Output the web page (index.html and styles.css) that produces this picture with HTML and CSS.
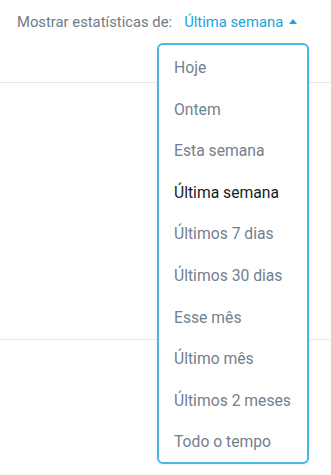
FILE: index.html
```html
<!DOCTYPE html>
<html lang="pt">
<head>
<meta charset="utf-8">
<link rel="stylesheet" href="styles.css">
</head>
<body>
<div class="page">
  <div class="toolbar">
    <span class="label">Mostrar estatísticas de:</span>
    <span class="picker">Última semana <span class="caret"></span></span>
  </div>
  <div class="section first"></div>
  <div class="section second"></div>
  <ul class="menu">
    <li>Hoje</li>
    <li>Ontem</li>
    <li>Esta semana</li>
    <li class="active">Última semana</li>
    <li>Últimos 7 dias</li>
    <li>Últimos 30 dias</li>
    <li>Esse mês</li>
    <li>Último mês</li>
    <li>Últimos 2 meses</li>
    <li>Todo o tempo</li>
  </ul>
</div>
</body>
</html>
```
FILE: styles.css
```css
html, body {
  margin: 0;
  padding: 0;
  background: #ffffff;
}
.page {
  position: relative;
  width: 331px;
  height: 475px;
  overflow: hidden;
  font-family: Roboto, "Liberation Sans", sans-serif;
}
.toolbar {
  height: 44px;
  display: flex;
  align-items: center;
  padding-left: 17px;
  font-size: 14.8px;
  box-sizing: border-box;
}
.label {
  color: #6f7b88;
}
.picker {
  margin-left: 12px;
  color: #1ba3dd;
  display: flex;
  align-items: center;
}
.caret {
  display: inline-block;
  width: 0;
  height: 0;
  margin-left: 6px;
  border-left: 4px solid transparent;
  border-right: 4px solid transparent;
  border-bottom: 5px solid #1ba3dd;
  margin-top: -2px;
}
.section {
  border-bottom: 1px solid #e6e8ea;
}
.section.first {
  height: 38px;
}
.section.second {
  height: 256px;
}
.menu {
  position: absolute;
  top: 43px;
  left: 157px;
  width: 152px;
  height: 421px;
  box-sizing: border-box;
  margin: 0;
  padding: 2px 0 0;
  list-style: none;
  background: #ffffff;
  border: 2px solid #45b8e8;
  border-radius: 6px;
  box-shadow: 0 1px 3px rgba(0, 0, 0, 0.08);
}
.menu li {
  height: 41.6px;
  line-height: 41.6px;
  padding-left: 15px;
  font-size: 15.7px;
  color: #737f8c;
  white-space: nowrap;
}
.menu li.active {
  color: #1b1b1b;
}
```
